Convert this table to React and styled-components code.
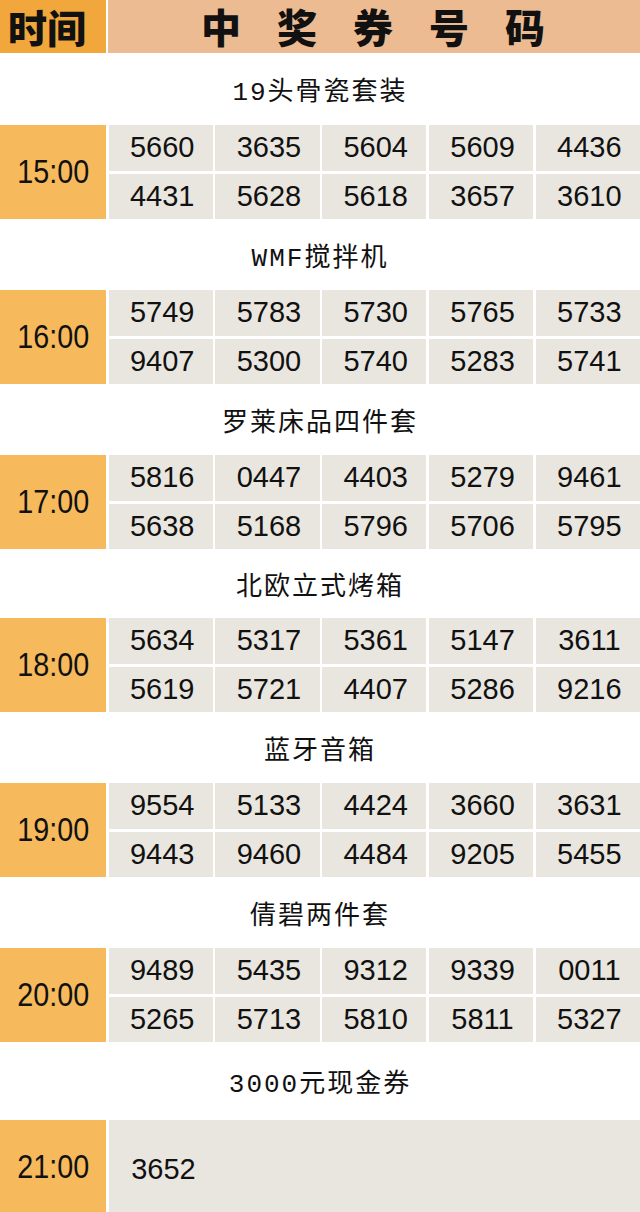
import React from "react";
import styled, { createGlobalStyle } from "styled-components";

const Global = createGlobalStyle`
  html, body { margin: 0; padding: 0; background: #ffffff; }
  body { font-family: "Liberation Sans", "Noto Sans CJK SC", sans-serif; }
`;

const Page = styled.div`
  width: 640px;
  background: #ffffff;
  overflow: hidden;
`;

const Header = styled.div`
  display: grid;
  grid-template-columns: 106px 1fr;
  column-gap: 2px;
  height: 53px;
`;

const HeaderTime = styled.div`
  background: #f1a73b;
  display: flex;
  align-items: center;
  padding-left: 8px;
  font-family: "Noto Sans CJK SC", sans-serif;
  font-weight: 900;
  font-size: 39px;
  color: #111;
  line-height: 53px;
  white-space: nowrap;
`;

const HeaderTitle = styled.div`
  background: #edbb91;
  display: flex;
  align-items: center;
  justify-content: center;
  padding-left: 34px;
  font-family: "Noto Sans CJK SC", sans-serif;
  font-weight: 900;
  font-size: 40px;
  letter-spacing: 36px;
  color: #111;
  line-height: 53px;
  white-space: nowrap;
`;

const PrizeTitle = styled.div`
  height: ${(p) => p.$h}px;
  display: flex;
  align-items: center;
  justify-content: center;
  font-family: "Liberation Mono", "Noto Sans CJK SC", monospace;
  font-size: 26px;
  letter-spacing: 2px;
  color: #111;
`;

const Block = styled.div`
  display: grid;
  grid-template-columns: 106px repeat(5, 1fr);
  grid-template-rows: 1fr 1fr;
  column-gap: 2.5px;
  row-gap: 3px;
  height: 94px;
`;

const TimeCell = styled.div`
  grid-row: 1 / span 2;
  background: #f6b95c;
  display: flex;
  align-items: center;
  justify-content: center;
`;

const TimeText = styled.span`
  display: inline-block;
  font-family: "Liberation Sans", sans-serif;
  font-size: 33px;
  color: #111;
  transform: scaleX(0.87);
`;

const NumCell = styled.div`
  background: #e9e6df;
  display: flex;
  align-items: center;
  justify-content: center;
  padding-left: 3px;
  font-family: "Liberation Sans", sans-serif;
  font-size: 29px;
  color: #111;
`;

const WideCell = styled.div`
  grid-column: 2 / span 5;
  grid-row: 1 / span 2;
  background: #e9e6df;
  display: flex;
  align-items: center;
  font-family: "Liberation Sans", sans-serif;
  font-size: 29px;
  color: #111;
`;

const WideNum = styled.span`
  width: 104px;
  text-align: center;
  padding-left: 3px;
  margin-top: 4px;
`;

const data = [
  {
    title: "19头骨瓷套装",
    h: 72,
    time: "15:00",
    nums: ["5660", "3635", "5604", "5609", "4436", "4431", "5628", "5618", "3657", "3610"],
  },
  {
    title: "WMF搅拌机",
    h: 71,
    time: "16:00",
    nums: ["5749", "5783", "5730", "5765", "5733", "9407", "5300", "5740", "5283", "5741"],
  },
  {
    title: "罗莱床品四件套",
    h: 71,
    time: "17:00",
    nums: ["5816", "0447", "4403", "5279", "9461", "5638", "5168", "5796", "5706", "5795"],
  },
  {
    title: "北欧立式烤箱",
    h: 69,
    time: "18:00",
    nums: ["5634", "5317", "5361", "5147", "3611", "5619", "5721", "4407", "5286", "9216"],
  },
  {
    title: "蓝牙音箱",
    h: 71,
    time: "19:00",
    nums: ["9554", "5133", "4424", "3660", "3631", "9443", "9460", "4484", "9205", "5455"],
  },
  {
    title: "倩碧两件套",
    h: 71,
    time: "20:00",
    nums: ["9489", "5435", "9312", "9339", "0011", "5265", "5713", "5810", "5811", "5327"],
  },
];

export default function App() {
  return (
    <Page>
      <Global />
      <Header>
        <HeaderTime>时间</HeaderTime>
        <HeaderTitle>中奖券号码</HeaderTitle>
      </Header>
      {data.map((d) => (
        <React.Fragment key={d.time}>
          <PrizeTitle $h={d.h}>{d.title}</PrizeTitle>
          <Block>
            <TimeCell>
              <TimeText>{d.time}</TimeText>
            </TimeCell>
            {d.nums.map((n, i) => (
              <NumCell key={i}>{n}</NumCell>
            ))}
          </Block>
        </React.Fragment>
      ))}
      <PrizeTitle $h={78}>3000元现金券</PrizeTitle>
      <Block>
        <TimeCell>
          <TimeText>21:00</TimeText>
        </TimeCell>
        <WideCell>
          <WideNum>3652</WideNum>
        </WideCell>
      </Block>
    </Page>
  );
}
